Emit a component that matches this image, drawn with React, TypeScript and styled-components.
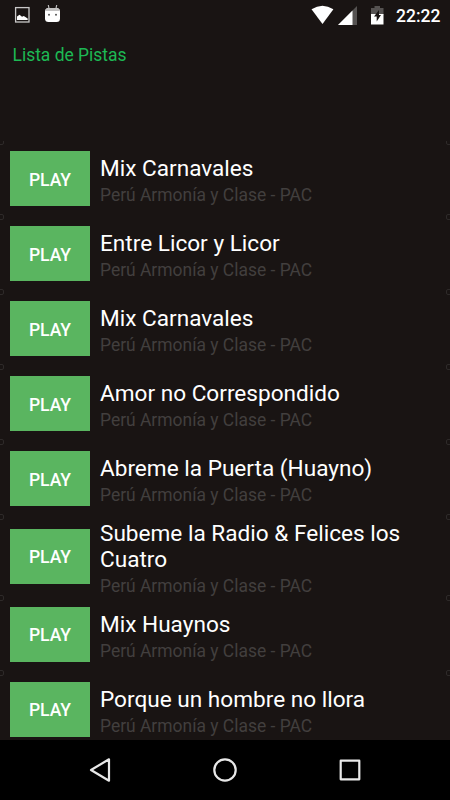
import React from "react";
import styled, { createGlobalStyle } from "styled-components";

const Global = createGlobalStyle`
  * { box-sizing: border-box; }
  body { margin: 0; background: #191413; font-family: Roboto, "Noto Sans", sans-serif; }
`;

const Screen = styled.main`
  display: flex;
  flex-direction: column;
  width: 450px;
  height: 800px;
  overflow: hidden;
  background: #191413;
`;

const StatusBar = styled.header`
  display: flex;
  flex: none;
  height: 31px;
`;

const SystemIcons = styled.svg`
  margin-left: auto;
`;

const Clock = styled.time`
  width: 54px;
  padding-top: 6px;
  font-size: 17.5px;
  line-height: 21px;
  font-weight: 500;
  color: #fff;
`;

const Heading = styled.h1`
  flex: none;
  height: 110px;
  margin: 0;
  padding: 14px 12.5px 0;
  font-size: 17.45px;
  line-height: 21px;
  font-weight: 400;
  color: #1db954;
`;

const TrackList = styled.ul`
  flex: 1;
  min-height: 0;
  margin: 0;
  padding: 0;
  overflow: hidden;
  list-style: none;
`;

const Track = styled.li<{ $tall?: boolean }>`
  position: relative;
  display: flex;
  align-items: center;
  gap: 10px;
  height: ${(p) => (p.$tall ? 80.6 : 75)}px;
  padding-left: 10px;

  &::before,
  &::after {
    content: "";
    position: absolute;
    top: -2px;
    width: 4px;
    height: 4px;
    border: 1px solid #2e2a29;
    border-radius: 2px;
  }
  &::before { left: -2px; }
  &::after { right: -2px; }
`;

const PlayButton = styled.button`
  flex: none;
  width: 80px;
  height: 55px;
  padding: 2px 0 0;
  border: 0;
  background: #5ab560;
  color: #fff;
  font: 500 17.5px/20px Roboto, sans-serif;
`;

const Details = styled.div`
  width: 320px;
  padding-top: 5px;
`;

const Title = styled.div`
  font-size: 22.6px;
  line-height: 26px;
  color: #fff;
`;

const Artist = styled.div`
  padding-top: 2px;
  font-size: 17.45px;
  line-height: 22px;
  color: #423f3e;
`;

const NavBar = styled.nav`
  display: flex;
  flex: none;
  height: 60px;
  background: #000;
`;

const tracks = [
  "Mix Carnavales",
  "Entre Licor y Licor",
  "Mix Carnavales",
  "Amor no Correspondido",
  "Abreme la Puerta (Huayno)",
  "Subeme la Radio & Felices los Cuatro",
  "Mix Huaynos",
  "Porque un hombre no llora",
];

export default function App() {
  return (
    <Screen>
      <Global />
      <StatusBar>
        <svg width="80" height="31" viewBox="0 0 80 31">
          <rect x="15.600" y="7.600" width="13.400" height="14.400" fill="none" stroke="#c9c8c8" strokeWidth="1.300" />
          <path d="M17 20v-3.500l2.500-1.700 2.500 2 1.800-.8 3.900 2.500V20z" fill="#fff" />
          <path d="M48.300 5l.8 4M56.700 5l-.8 4" stroke="#bbb" strokeWidth="1.200" />
          <rect x="45" y="8" width="15" height="14" rx="3.500" fill="#fff" />
          <path d="M45.200 11q.5-3 3.300-3h8q2.800 0 3.300 3z" fill="#c2c1c1" />
          <circle cx="49" cy="14.700" r="1" fill="#555" />
          <circle cx="56" cy="14.700" r="1" fill="#555" />
        </svg>
        <SystemIcons width="86" height="31" viewBox="310 0 86 31">
          <path d="M311.500 9.300Q322.500 2.300 333.400 9.300L322.500 24z" fill="#fff" />
          <path d="M357 6v19h-19z" fill="#555251" />
          <path d="M352.500 10.500V25H338z" fill="#fff" />
          <path d="M371 8h3.500V6h5.500v2h3.500v7H371z" fill="#555251" />
          <path d="M371 14h12.500v10.500H371z" fill="#fff" />
          <path d="M379 10l-5 6.500h2.700V21.500l4.300-6.500h-2z" fill="#191413" />
        </SystemIcons>
        <Clock>22:22</Clock>
      </StatusBar>
      <Heading>Lista de Pistas</Heading>
      <TrackList>
        {tracks.map((title, i) => (
          <Track key={i} $tall={title.length > 30}>
            <PlayButton>PLAY</PlayButton>
            <Details>
              <Title>{title}</Title>
              <Artist>Perú Armonía y Clase - PAC</Artist>
            </Details>
          </Track>
        ))}
      </TrackList>
      <NavBar>
        <svg width="450" height="60" viewBox="0 740 450 60" fill="none" stroke="#e8e8e8" strokeWidth="2.200" strokeLinejoin="round">
          <path d="M109 759.300v21.400L91 770z" />
          <circle cx="225" cy="770" r="10.700" />
          <rect x="340.700" y="760.700" width="18.600" height="18.600" />
        </svg>
      </NavBar>
    </Screen>
  );
}
